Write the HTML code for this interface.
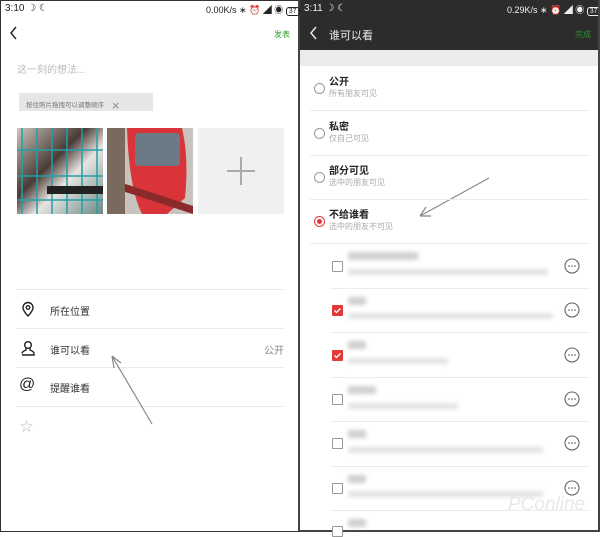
<!DOCTYPE html>
<html><head><meta charset="utf-8"><style>
*{margin:0;padding:0;box-sizing:border-box}
body{width:600px;height:532px;overflow:hidden;background:#fff;font-family:"Liberation Sans","Noto Sans CJK SC",sans-serif;position:relative}
.a{position:absolute;white-space:nowrap}
.hl{position:absolute;height:1px;background:#ececec}
.blur{position:absolute;background:#cfcfcf;filter:blur(2px);border-radius:2px}
.cb{position:absolute;width:11px;height:11px;border:1px solid #999;border-radius:1px;background:#fff}
.cbr{background:#e23a3a;border-color:#e23a3a}
.rad{position:absolute;width:11px;height:11px;border:1px solid #999;border-radius:50%}
</style></head><body>
<div class="a" style="left:0;top:0;width:300px;height:532px;border:1px solid #333;border-right:2px solid #444"></div>
<div class="a" style="left:5px;top:3px;font-size:10px;color:#222">3:10 ☽ ☾</div>
<div class="a" style="left:206px;top:3px;font-size:9px;color:#222">0.00K/s ∗ ⏰ ◢ ◉ <span style="border:1px solid #222;border-radius:3px;padding:0 2px;font-size:7px">37</span></div>
<svg class="a" style="left:9px;top:26px" width="10" height="14"><path d="M7 1L2 7l5 6" fill="none" stroke="#222" stroke-width="1.4"/></svg>
<div class="a" style="left:274px;top:29px;font-size:8px;color:#2aa02a">发表</div>
<div class="a" style="left:17px;top:61px;font-size:10px;color:#bbb">这一刻的想法...</div>
<div class="a" style="left:19px;top:93px;width:134px;height:18px;background:#e6e6e6;font-size:6.5px;color:#777;padding:5px 0 0 7px">按住照片拖拽可以调整顺序 <span style="font-size:13px;vertical-align:-3px;color:#888;margin-left:6px">×</span></div>
<div class="a" style="left:17px;top:128px;width:86px;height:86px;background:linear-gradient(135deg,#c9c5bd,#4a3a36 40%,#e8e4e0 60%,#6a8a86);"></div>
<svg class="a" style="left:17px;top:128px" width="86" height="86"><g stroke="#22a0a8" stroke-width="1.5" fill="none"><path d="M5 0V86M20 0V86M35 0V86M50 0V86M65 0V86M80 0V86M0 22H86M0 48H86M0 72H86"/></g><rect x="30" y="58" width="56" height="8" fill="#222"/></svg>
<div class="a" style="left:107px;top:128px;width:86px;height:86px;background:#c8c3bd"></div>
<svg class="a" style="left:107px;top:128px" width="86" height="86"><path d="M20 0H75Q82 30 78 70L60 86H35Q22 60 20 0Z" fill="#d8343a"/><rect x="28" y="5" width="45" height="33" rx="4" fill="#6b7a85"/><path d="M0 58L86 86V78L0 50Z" fill="#8a2a2a"/><rect x="0" y="0" width="18" height="86" fill="#7a6a5e"/></svg>
<div class="a" style="left:198px;top:128px;width:86px;height:86px;background:#f0f0f0"></div>
<div class="a" style="left:227px;top:170px;width:28px;height:2px;background:#aaa"></div>
<div class="a" style="left:240px;top:157px;width:2px;height:28px;background:#aaa"></div>
<div class="hl" style="left:16px;top:289px;width:268px"></div>
<div class="hl" style="left:16px;top:328px;width:268px"></div>
<div class="hl" style="left:16px;top:367px;width:268px"></div>
<div class="hl" style="left:16px;top:406px;width:268px"></div>
<svg class="a" style="left:20px;top:301px" width="16" height="16"><path d="M8 1.5a5 5 0 0 1 5 5c0 3.5-5 8.5-5 8.5s-5-5-5-8.5a5 5 0 0 1 5-5z" fill="none" stroke="#222" stroke-width="1.4"/><circle cx="8" cy="6.5" r="1.8" fill="none" stroke="#222" stroke-width="1.3"/></svg>
<svg class="a" style="left:20px;top:340px" width="16" height="16"><circle cx="8" cy="5" r="3.3" fill="none" stroke="#222" stroke-width="1.4"/><path d="M2 15h12v-1.5c0-2-3-3-4-3.5v-2M6 8v2c-1 .5-4 1.5-4 3.5" fill="none" stroke="#222" stroke-width="1.4"/></svg>
<div class="a" style="left:19px;top:376px;font-size:16px;color:#222">@</div>
<div class="a" style="left:20px;top:416px;font-size:13px;color:#bbb">☆</div>
<div class="a" style="left:50px;top:303px;font-size:10px;color:#333">所在位置</div>
<div class="a" style="left:50px;top:342px;font-size:10px;color:#333">谁可以看</div>
<div class="a" style="left:264px;top:342px;font-size:10px;color:#888">公开</div>
<div class="a" style="left:50px;top:380px;font-size:10px;color:#333">提醒谁看</div>
<svg class="a" style="left:0;top:0" width="600" height="532"><g stroke="#888" stroke-width="1.2" fill="none"><path d="M152 424L112 356M112 356l2 12M112 356l9 7"/><path d="M489 178L420 216M420 216l11 0M420 216l6 -9"/></g></svg>
<div class="a" style="left:300px;top:0;width:300px;height:50px;background:#2c2c2c"></div>
<div class="a" style="left:304px;top:3px;font-size:10px;color:#eee">3:11 ☽ ☾</div>
<div class="a" style="left:507px;top:3px;font-size:9px;color:#eee">0.29K/s ∗ ⏰ ◢ ◉ <span style="border:1px solid #eee;border-radius:3px;padding:0 2px;font-size:7px">37</span></div>
<svg class="a" style="left:309px;top:26px" width="10" height="14"><path d="M7 1L2 7l5 6" fill="none" stroke="#eee" stroke-width="1.4"/></svg>
<div class="a" style="left:329px;top:27px;font-size:11px;color:#eee">谁可以看</div>
<div class="a" style="left:575px;top:29px;font-size:8px;color:#2d8a2d">完成</div>
<div class="a" style="left:300px;top:50px;width:300px;height:16px;background:#ebebeb"></div>
<div class="a" style="left:598px;top:0;width:2px;height:532px;background:#444"></div>
<div class="a" style="left:300px;top:530px;width:300px;height:2px;background:#444"></div>
<div class="rad" style="left:314px;top:83px"></div>
<div class="rad" style="left:314px;top:128px"></div>
<div class="rad" style="left:314px;top:172px"></div>
<div class="rad" style="left:314px;top:216px;border-color:#e23a3a"><div style="width:5px;height:5px;margin:2px;border-radius:50%;background:#e23a3a"></div></div>
<div class="a" style="left:329px;top:73px;font-size:10px;color:#222;font-weight:bold">公开</div>
<div class="a" style="left:329px;top:88px;font-size:8px;color:#aaa">所有朋友可见</div>
<div class="a" style="left:329px;top:118px;font-size:10px;color:#222;font-weight:bold">私密</div>
<div class="a" style="left:329px;top:133px;font-size:8px;color:#aaa">仅自己可见</div>
<div class="a" style="left:329px;top:162px;font-size:10px;color:#222;font-weight:bold">部分可见</div>
<div class="a" style="left:329px;top:177px;font-size:8px;color:#aaa">选中的朋友可见</div>
<div class="a" style="left:329px;top:206px;font-size:10px;color:#222;font-weight:bold">不给谁看</div>
<div class="a" style="left:329px;top:221px;font-size:8px;color:#aaa">选中的朋友不可见</div>
<div class="hl" style="left:310px;top:110px;width:280px"></div>
<div class="hl" style="left:310px;top:155px;width:280px"></div>
<div class="hl" style="left:310px;top:199px;width:280px"></div>
<div class="hl" style="left:310px;top:243px;width:280px"></div>
<div class="hl" style="left:330px;top:288px;width:260px"></div>
<div class="hl" style="left:330px;top:332px;width:260px"></div>
<div class="hl" style="left:330px;top:377px;width:260px"></div>
<div class="hl" style="left:330px;top:421px;width:260px"></div>
<div class="hl" style="left:330px;top:466px;width:260px"></div>
<div class="hl" style="left:330px;top:510px;width:260px"></div>
<div class="cb" style="left:332px;top:261px"></div>
<div class="cb cbr" style="left:332px;top:305px"><svg width="9" height="9" style="position:absolute;left:0;top:0"><path d="M1.5 4.5l2 2 4-4" fill="none" stroke="#fff" stroke-width="1.3"/></svg></div>
<div class="cb cbr" style="left:332px;top:350px"><svg width="9" height="9" style="position:absolute;left:0;top:0"><path d="M1.5 4.5l2 2 4-4" fill="none" stroke="#fff" stroke-width="1.3"/></svg></div>
<div class="cb" style="left:332px;top:394px"></div>
<div class="cb" style="left:332px;top:438px"></div>
<div class="cb" style="left:332px;top:483px"></div>
<div class="cb" style="left:332px;top:526px"></div>
<div class="blur" style="left:348px;top:252px;width:70px;height:8px"></div><div class="blur" style="left:348px;top:269px;width:200px;height:6px;background:#e2e2e2"></div>
<div class="blur" style="left:348px;top:297px;width:18px;height:8px"></div><div class="blur" style="left:348px;top:313px;width:205px;height:6px;background:#e2e2e2"></div>
<div class="blur" style="left:348px;top:341px;width:18px;height:8px"></div><div class="blur" style="left:348px;top:358px;width:100px;height:6px;background:#e2e2e2"></div>
<div class="blur" style="left:348px;top:386px;width:28px;height:8px"></div><div class="blur" style="left:348px;top:403px;width:110px;height:6px;background:#e2e2e2"></div>
<div class="blur" style="left:348px;top:430px;width:18px;height:8px"></div><div class="blur" style="left:348px;top:447px;width:195px;height:6px;background:#e2e2e2"></div>
<div class="blur" style="left:348px;top:475px;width:18px;height:8px"></div><div class="blur" style="left:348px;top:491px;width:195px;height:6px;background:#e2e2e2"></div>
<div class="blur" style="left:348px;top:519px;width:18px;height:8px"></div>
<svg class="a" style="left:0;top:0" width="600" height="532"><defs><g id="m"><circle r="7" fill="none" stroke="#666" stroke-width="1.1"/><circle cx="-3" r="0.8" fill="#555"/><circle r="0.8" fill="#555"/><circle cx="3" r="0.8" fill="#555"/></g></defs>
<use href="#m" x="572" y="266"/><use href="#m" x="572" y="310"/><use href="#m" x="572" y="355"/><use href="#m" x="572" y="399"/><use href="#m" x="572" y="443"/><use href="#m" x="572" y="488"/></svg>
<div class="a" style="left:508px;top:494px;font-size:19px;color:#e8e8e8;font-style:italic">PConline</div>
</body></html>
